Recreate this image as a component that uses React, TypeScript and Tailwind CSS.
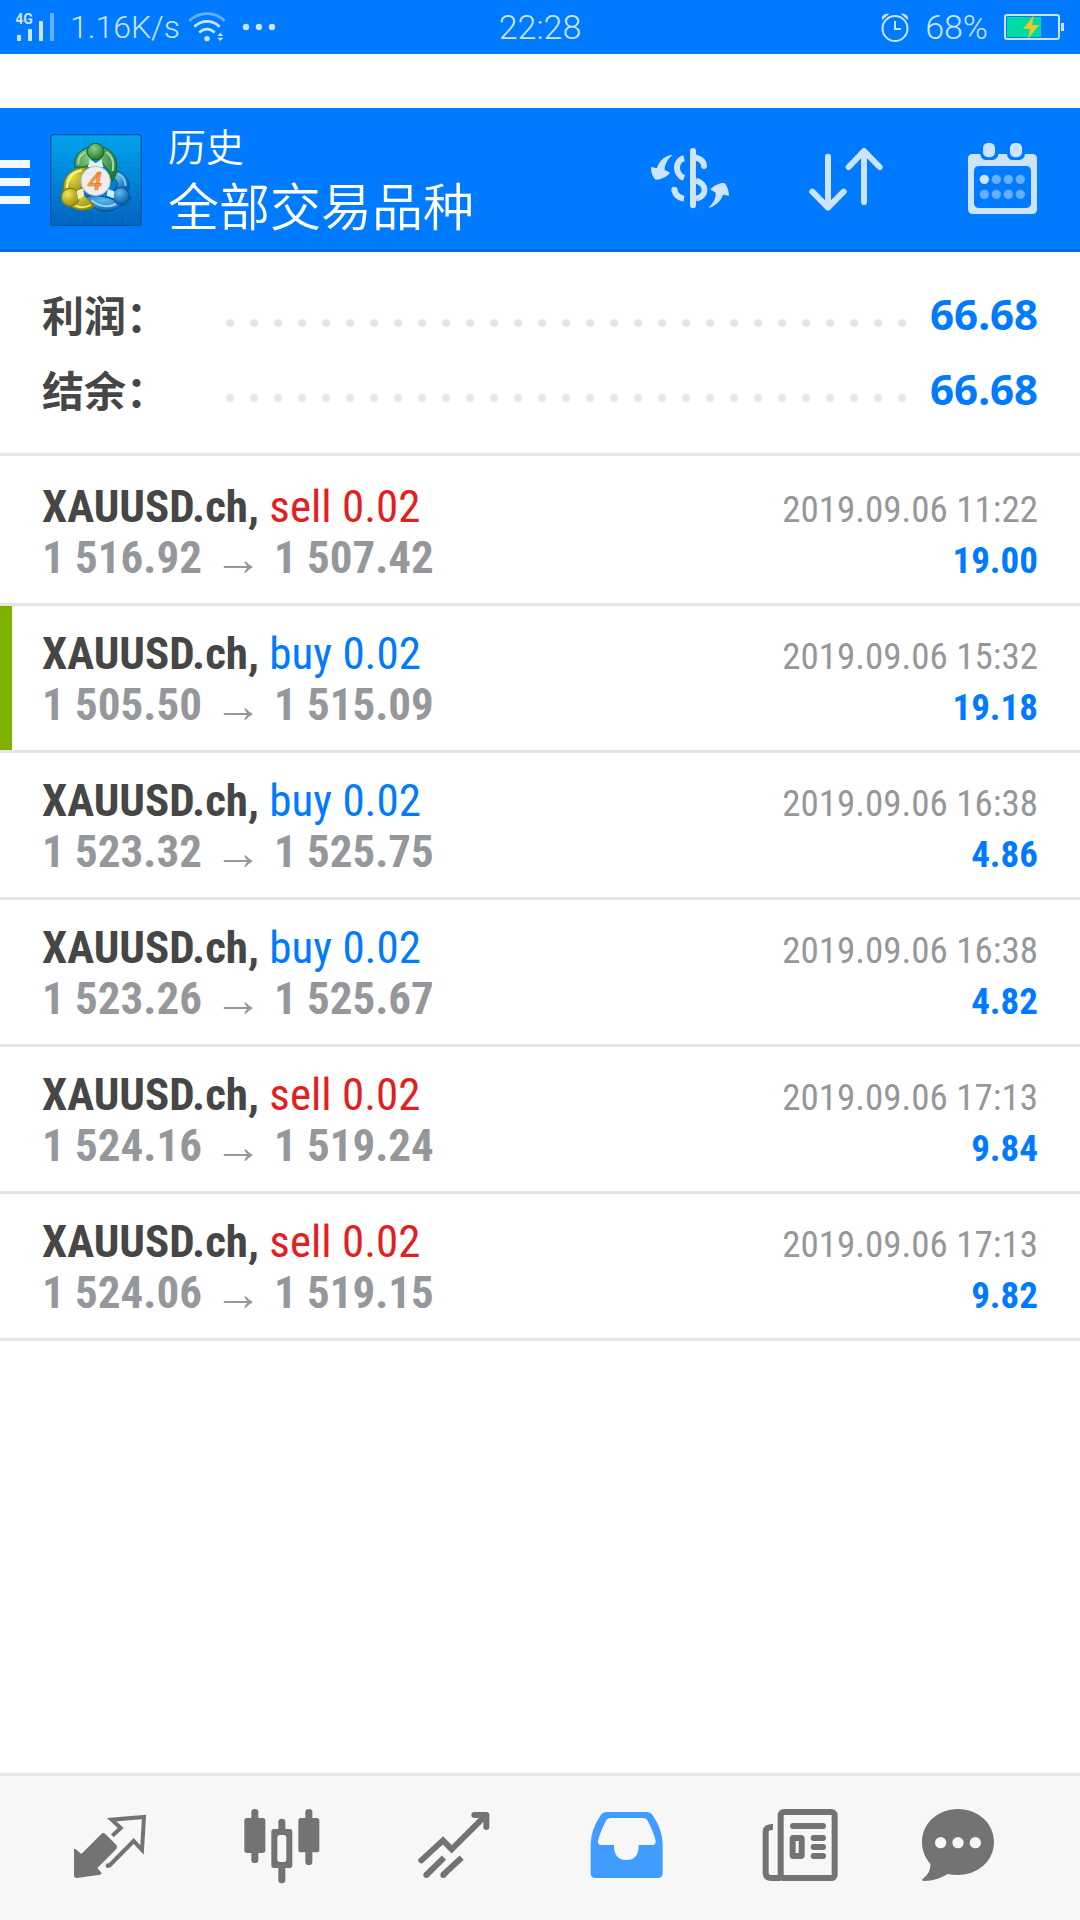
import React, { useState } from 'react';

type Deal = {
  symbol: string;
  side: 'buy' | 'sell';
  volume: string;
  open: string;
  close: string;
  time: string;
  profit: string;
  takeProfit?: boolean;
};

const deals: Deal[] = [
  { symbol: 'XAUUSD.ch', side: 'sell', volume: '0.02', open: '1 516.92', close: '1 507.42', time: '2019.09.06 11:22', profit: '19.00' },
  { symbol: 'XAUUSD.ch', side: 'buy', volume: '0.02', open: '1 505.50', close: '1 515.09', time: '2019.09.06 15:32', profit: '19.18', takeProfit: true },
  { symbol: 'XAUUSD.ch', side: 'buy', volume: '0.02', open: '1 523.32', close: '1 525.75', time: '2019.09.06 16:38', profit: '4.86' },
  { symbol: 'XAUUSD.ch', side: 'buy', volume: '0.02', open: '1 523.26', close: '1 525.67', time: '2019.09.06 16:38', profit: '4.82' },
  { symbol: 'XAUUSD.ch', side: 'sell', volume: '0.02', open: '1 524.16', close: '1 519.24', time: '2019.09.06 17:13', profit: '9.84' },
  { symbol: 'XAUUSD.ch', side: 'sell', volume: '0.02', open: '1 524.06', close: '1 519.15', time: '2019.09.06 17:13', profit: '9.82' },
];

const summary = [
  { label: '利润：', value: '66.68' },
  { label: '结余：', value: '66.68' },
];

function StatusBar() {
  return (
    <div className="grid h-[54px] grid-cols-3 items-center bg-[#007aff] px-4 font-['Roboto',sans-serif] text-[34px] leading-[54px] font-light text-[#cce4ff]">
      <div className="flex items-center">
        <svg className="h-[30px] w-[38px]" viewBox="48 36 114 90" fill="currentColor">
          <text x="46" y="72" fontSize="42" fontWeight="700" fontFamily="Roboto, sans-serif">4G</text>
          <rect x="51" y="105" width="12" height="18" rx="2" />
          <rect x="84" y="87" width="12" height="36" rx="2" />
          <rect x="117" y="63" width="12" height="60" rx="2" />
          <rect x="150" y="39" width="12" height="84" rx="2" opacity="0.5" />
        </svg>
        <span className="ml-4 text-[32px]">1.16K/s</span>
        <svg className="ml-2 h-[30px] w-[38px]" viewBox="560 36 114 90" fill="none" stroke="currentColor" strokeWidth="8">
          <path d="M564 62C594 34 640 34 670 62" opacity="0.5" />
          <path d="M579 80C601 59 633 59 655 80" />
          <path d="M594 98C608 84 626 84 640 98" />
          <circle cx="617" cy="116" r="8" fill="currentColor" stroke="none" />
          <path d="M648 108l9-10 9 10zM648 113l9 10 9-10z" fill="currentColor" stroke="none" />
        </svg>
        <svg className="ml-4 h-[8px] w-[34px]" viewBox="720 69 102 24" fill="currentColor">
          <circle cx="732" cy="81" r="9.500" />
          <circle cx="771" cy="81" r="9.500" />
          <circle cx="810" cy="81" r="9.500" />
        </svg>
      </div>
      <span className="text-center">22:28</span>
      <div className="flex items-center justify-end">
        <svg className="h-[30px] w-[28px]" viewBox="0 0 28 30" fill="none" stroke="currentColor" strokeWidth="2">
          <circle cx="14" cy="16.500" r="12.500" />
          <path d="M14 9v8h6" />
          <path d="M1 8C0 4 4 1 8 2L1 8zM27 8c1-4-3-7-7-6l7 6z" fill="currentColor" stroke="none" />
        </svg>
        <span className="ml-4">68%</span>
        <svg className="ml-4 h-[30px] w-[60px]" viewBox="0 0 60 30">
          <rect x="1" y="3" width="54" height="24" rx="2" fill="none" stroke="#cce4ff" strokeWidth="2" />
          <rect x="3" y="5" width="34" height="20" fill="#00dba0" />
          <path d="M57 11h3v8h-3z" fill="#cce4ff" />
          <path d="M30 3L19 17h7l-2 10 11-14h-7z" fill="#e6c832" />
        </svg>
      </div>
    </div>
  );
}

function AppLogo() {
  return (
    <svg className="h-[92px] w-[92px]" viewBox="150 102 276 276">
      <defs>
        <linearGradient id="tile" x1="0" y1="0" x2="0" y2="1">
          <stop offset="0" stopColor="#00a2ee" />
          <stop offset="0.500" stopColor="#0084d8" />
          <stop offset="1" stopColor="#0064c0" />
        </linearGradient>
        <radialGradient id="green" cx="0.400" cy="0.300" r="0.700">
          <stop offset="0" stopColor="#8fd08a" />
          <stop offset="1" stopColor="#1d7a35" />
        </radialGradient>
        <radialGradient id="yellow" cx="0.350" cy="0.300" r="0.750">
          <stop offset="0" stopColor="#f0e550" />
          <stop offset="1" stopColor="#8f8a0a" />
        </radialGradient>
        <radialGradient id="blue" cx="0.400" cy="0.300" r="0.700">
          <stop offset="0" stopColor="#5cbcf0" />
          <stop offset="1" stopColor="#0a5da8" />
        </radialGradient>
      </defs>
      <rect x="152" y="104" width="272" height="272" rx="10" fill="url(#tile)" stroke="#0454a4" strokeWidth="4" />
      <path d="M197 106v268M242 106v268M287 106v268M332 106v268M377 106v268M154 150h268M154 195h268M154 240h268M154 285h268M154 330h268" stroke="#ffffff" strokeWidth="2" opacity="0.060" />

      <path d="M345 212C370 216 388 236 388 262L383 275 340 275 352 255C353 243 345 236 332 233Z" fill="url(#blue)" stroke="#08508f" strokeWidth="3" />
      <path d="M353 221C368 228 377 242 377 258" fill="none" stroke="#7fd0fa" strokeWidth="5" />
      <path d="M256 290C282 282 322 290 345 301L392 290C394 312 374 316 360 317C340 337 305 340 283 322C270 312 261 302 256 290Z" fill="url(#blue)" stroke="#08508f" strokeWidth="3" />
      <path d="M274 300C292 317 322 325 348 312" fill="none" stroke="#8bd4fb" strokeWidth="6" />

      <path d="M257 201C219 203 189 228 190 266L186 284 224 276 246 264C246 243 252 225 262 212Z" fill="url(#yellow)" stroke="#77740a" strokeWidth="3" />
      <path d="M246 211C218 216 201 236 201 264" fill="none" stroke="#fff685" strokeWidth="6" />
      <path d="M184 302C190 316 206 317 214 320C235 335 267 334 284 318L260 294 240 272 236 298Z" fill="url(#yellow)" stroke="#77740a" strokeWidth="3" />
      <path d="M219 314C238 324 256 324 272 315" fill="none" stroke="#efe968" strokeWidth="6" />

      <path d="M264 143C234 151 220 175 225 202C244 200 252 202 262 198L276 178H298L316 200C329 214 332 232 329 250C347 235 353 210 350 190C348 166 330 148 309 142Z" fill="url(#green)" stroke="#126129" strokeWidth="3" />
      <path d="M255 157C239 165 234 178 235 193M318 156C338 168 342 192 338 213" fill="none" stroke="#a5dda0" strokeWidth="6" />
      <path d="M270 178L287 190 304 178 310 201H263Z" fill="#e4f3e4" />

      <circle cx="287" cy="155" r="25" fill="url(#green)" stroke="#126129" strokeWidth="3" />
      <circle cx="211" cy="292" r="27" fill="url(#yellow)" stroke="#77740a" strokeWidth="3" />
      <circle cx="363" cy="288" r="25" fill="url(#blue)" stroke="#08508f" strokeWidth="3" />
      <path d="M230 272l20-7 2 22-17 12z" fill="#f3f1c0" />
      <path d="M343 274l-20-7-3 20 21 8z" fill="#d4ecfa" />
      <circle cx="287" cy="243" r="44" fill="#eeeef2" stroke="#b9bec8" strokeWidth="3" />
      <text x="285" y="270" textAnchor="middle" fontSize="78" fontWeight="500" fontStyle="italic" fontFamily="Roboto, sans-serif" fill="#f7a04a" stroke="#e8741c" strokeWidth="2">4</text>
    </svg>
  );
}

const headerButton = 'h-24 w-24 text-[#cce4ff]';

function Header() {
  return (
    <header className="flex h-36 items-center bg-[#007aff] pr-[30px] font-['Noto_Sans_CJK_SC',sans-serif] font-[350] text-white shadow-[inset_0_-3px_0_#006ee6]">
      <button aria-label="菜单" className="flex w-[30px] flex-col gap-[10px] pt-1">
        <span className="h-2 w-full bg-[#f0f7ff]" />
        <span className="h-2 w-full bg-[#f0f7ff]" />
        <span className="h-2 w-full bg-[#f0f7ff]" />
      </button>
      <div className="ml-5">
        <AppLogo />
      </div>
      <div className="ml-[26px] flex-1 pb-[6px]">
        <p className="text-[38px] leading-[54px]">历史</p>
        <h1 className="text-[51px] leading-[64px]">全部交易品种</h1>
      </div>
      <div className="flex gap-[60px]">
        <button aria-label="交易品种" className={headerButton}>
          <svg viewBox="66 36 288 288" fill="none" stroke="currentColor" strokeWidth="18" strokeLinecap="round">
            <path d="M219 93V256" />
            <path d="M192 114C164 122 164 164 192 174" strokeLinecap="butt" />
            <path d="M228 113C242 117 252 124 252 138" />
            <path d="M228 182C262 192 262 228 228 236" strokeLinecap="butt" />
            <path d="M163 209C166 224 176 234 192 236" strokeLinecap="butt" />
            <circle cx="163" cy="209" r="9" fill="currentColor" stroke="none" />
            <path d="M155 104C134 108 116 124 111 144C106 144 98 142 93 141C93 157 98 172 107 179C120 180 138 172 150 160C147 154 139 153 134 150C134 134 142 118 155 107Z" fill="currentColor" stroke="none" />
            <path d="M265 264C285 258 302 245 309 224C314 224 321 226 327 228C327 212 321 196 313 189C300 188 283 195 271 208C274 213 282 214 287 218C288 236 279 250 265 264Z" fill="currentColor" stroke="none" />
          </svg>
        </button>
        <button aria-label="排序" className={headerButton}>
          <svg viewBox="534 36 288 288" fill="none" stroke="currentColor" strokeWidth="18" strokeLinecap="round" strokeLinejoin="round">
            <path d="M624 110V262M577 215L624 263 671 215" />
            <path d="M732 246V94M686 141L732 93 779 141" />
          </svg>
        </button>
        <button aria-label="日期" className={headerButton}>
          <svg viewBox="1002 36 288 288" fill="currentColor">
            <path fillRule="evenodd" d="M1058 102H1081C1082 114 1090 120 1100 120H1116C1127 120 1134 113 1135 102H1161C1162 114 1170 120 1180 120H1196C1207 120 1214 113 1215 102H1237Q1251 102 1251 116V268Q1251 282 1237 282H1058Q1044 282 1044 268V116Q1044 102 1058 102ZM1078 138Q1062 138 1062 154V248Q1062 264 1078 264H1217Q1233 264 1233 248V154Q1233 138 1217 138Z" />
            <rect x="1089" y="69" width="36" height="43" rx="15" />
            <rect x="1170" y="69" width="36" height="43" rx="15" />
            <circle cx="1093" cy="178" r="14" />
            <g opacity="0.500">
              <circle cx="1129" cy="178" r="14" />
              <circle cx="1165" cy="178" r="14" />
              <circle cx="1201" cy="178" r="14" />
              <circle cx="1093" cy="223" r="14" />
              <circle cx="1129" cy="223" r="14" />
              <circle cx="1165" cy="223" r="14" />
              <circle cx="1201" cy="223" r="14" />
            </g>
          </svg>
        </button>
      </div>
    </header>
  );
}

function Summary() {
  return (
    <dl className="border-b-[3px] border-[#e5e5e5] px-[42px] pt-6 pb-[27px]">
      {summary.map((item) => (
        <div key={item.label} className="flex h-[75px] items-center">
          <dt className="w-[176px] font-['Noto_Sans_CJK_SC',sans-serif] text-[42px] leading-[75px] font-bold text-[#464646]">{item.label}</dt>
          <dd className="flex flex-1 items-center justify-between">
            <span className="mt-[18px] h-6 w-[696px] bg-[radial-gradient(circle,#e5e5e5_3px,transparent_5px)] bg-[length:24px_24px]" />
            <span className="font-['Noto_Sans',sans-serif] text-[42px] leading-[75px] font-bold text-[#007aff]">{item.value}</span>
          </dd>
        </div>
      ))}
    </dl>
  );
}

function DealRow({ deal }: { deal: Deal }) {
  return (
    <li className="flex h-[147px] border-b-[3px] border-[#e5e5e5]">
      <span className={deal.takeProfit ? 'w-3 bg-[#7eb000]' : 'w-3'} />
      <div className="flex-1 pt-[22px] pr-[42px] pl-[30px] text-[45px] leading-[51px]">
        <div className="flex h-[51px] items-baseline justify-between">
          <p>
            <span className="font-bold text-[#464646]">{deal.symbol},</span>{' '}
            <span className={deal.side === 'buy' ? 'text-[#007aff]' : 'text-[#e41e1e]'}>
              {deal.side} {deal.volume}
            </span>
          </p>
          <time className="text-[37px] text-[#96979b]">{deal.time}</time>
        </div>
        <div className="flex h-[51px] items-baseline justify-between font-bold">
          <p className="flex items-baseline text-[#96979b]">
            {deal.open}
            <span className="mx-3 self-end font-['Liberation_Sans',sans-serif] text-[48px] leading-[48px] font-normal">→</span>
            {deal.close}
          </p>
          <p className="text-[37px] text-[#007aff]">{deal.profit}</p>
        </div>
      </div>
    </li>
  );
}

const tabs = [
  {
    id: 'quotes',
    label: '行情',
    icon: (
      <svg className="h-24 w-[120px]" viewBox="24 120 360 288" fill="currentColor">
        <path d="M102 267L107 267 124 282 184 222Q190 216 196 222L229 255Q234 261 229 267L172 324 183 337Q187 342 180 344L110 354Q102 354 102 346Z" />
        <path d="M217 227L242 204 215 179 312 171 306 270 281 243 207 318" fill="none" stroke="currentColor" strokeWidth="12" />
        <circle cx="204" cy="317" r="7" />
      </svg>
    ),
  },
  {
    id: 'charts',
    label: '图表',
    icon: (
      <svg className="h-24 w-[120px]" viewBox="542 120 360 288" fill="currentColor">
        <rect x="633" y="147" width="21" height="162" rx="10" />
        <rect x="612" y="174" width="63" height="105" rx="8" />
        <rect x="795" y="147" width="21" height="168" rx="10" />
        <rect x="774" y="174" width="63" height="103" rx="8" />
        <rect x="714" y="176" width="21" height="44" rx="10" />
        <rect x="714" y="310" width="21" height="60" rx="10" />
        <rect x="693" y="207" width="63" height="117" rx="8" />
        <rect x="711" y="225" width="27" height="81" rx="8" fill="#f7f7f7" />
      </svg>
    ),
  },
  {
    id: 'trade',
    label: '交易',
    icon: (
      <svg className="h-24 w-[120px]" viewBox="11 120 360 288" fill="none" stroke="currentColor" strokeWidth="18">
        <path d="M93 301L158 241 184 268 286 166" strokeLinecap="round" />
        <path d="M252 165H288V201" strokeLinecap="round" strokeLinejoin="round" />
        <path d="M108 345L161 293M158 345L214 293" />
        <circle cx="108" cy="345" r="9" fill="currentColor" stroke="none" />
        <circle cx="159" cy="345" r="9" fill="currentColor" stroke="none" />
      </svg>
    ),
  },
  {
    id: 'history',
    label: '历史',
    icon: (
      <svg className="h-24 w-[120px]" viewBox="529 120 360 288">
        <path d="M652 156H770Q782 156 789 166Q819 210 819 254V340Q819 354 805 354H617Q603 354 603 340V254Q603 210 633 166Q640 156 652 156Z" fill="#419cff" />
        <path d="M665 174H758Q770 174 775 184Q792 218 798 242Q799 255 788 255H747V262Q745 300 710 300Q675 300 673 262V255H636Q623 255 625 242Q631 218 648 184Q653 174 665 174Z" fill="#f7f7f7" />
      </svg>
    ),
  },
  {
    id: 'news',
    label: '新闻',
    icon: (
      <svg className="h-24 w-[120px]" viewBox="-2 120 360 288" fill="none" stroke="currentColor" strokeWidth="18">
        <rect x="123" y="156" width="162" height="198" rx="10" />
        <path d="M100 201Q78 200 78 216V338Q78 354 96 354H123" />
        <path d="M160 198H250M222 234H250M222 261H250M222 288H250" strokeLinecap="round" />
        <rect x="159" y="234" width="27" height="54" rx="2" />
      </svg>
    ),
  },
  {
    id: 'chat',
    label: '聊天',
    icon: (
      <svg className="h-24 w-[120px]" viewBox="516 120 360 288" fill="currentColor">
        <path d="M654 147C714 147 762 190 762 246C762 302 714 345 654 345C643 345 632 344 622 342C604 354 580 363 552 363Q543 362 548 356C562 346 572 332 571 311C555 294 546 271 546 246C546 190 594 147 654 147Z" />
        <g fill="#f7f7f7">
          <circle cx="602" cy="248" r="17" />
          <circle cx="654" cy="248" r="17" />
          <circle cx="706" cy="248" r="17" />
        </g>
      </svg>
    ),
  },
];

export default function App() {
  const [activeTab, setActiveTab] = useState('history');

  return (
    <div className="flex min-h-screen flex-col bg-white font-['Roboto_Condensed','Roboto',sans-serif]">
      <StatusBar />
      <div className="h-[54px]" />
      <Header />
      <main className="flex-1">
        <Summary />
        <ul className="pt-[3px]">
          {deals.map((deal, i) => (
            <DealRow key={i} deal={deal} />
          ))}
        </ul>
      </main>
      <nav className="flex h-[147px] justify-between border-t-[3px] border-[#e5e5e5] bg-[#f7f7f7] px-12 pt-6 text-[#737373]">
        {tabs.map((tab) => (
          <button
            key={tab.id}
            aria-label={tab.label}
            aria-pressed={activeTab === tab.id}
            onClick={() => setActiveTab(tab.id)}
            className="h-24 w-[120px]"
          >
            {tab.icon}
          </button>
        ))}
      </nav>
    </div>
  );
}
